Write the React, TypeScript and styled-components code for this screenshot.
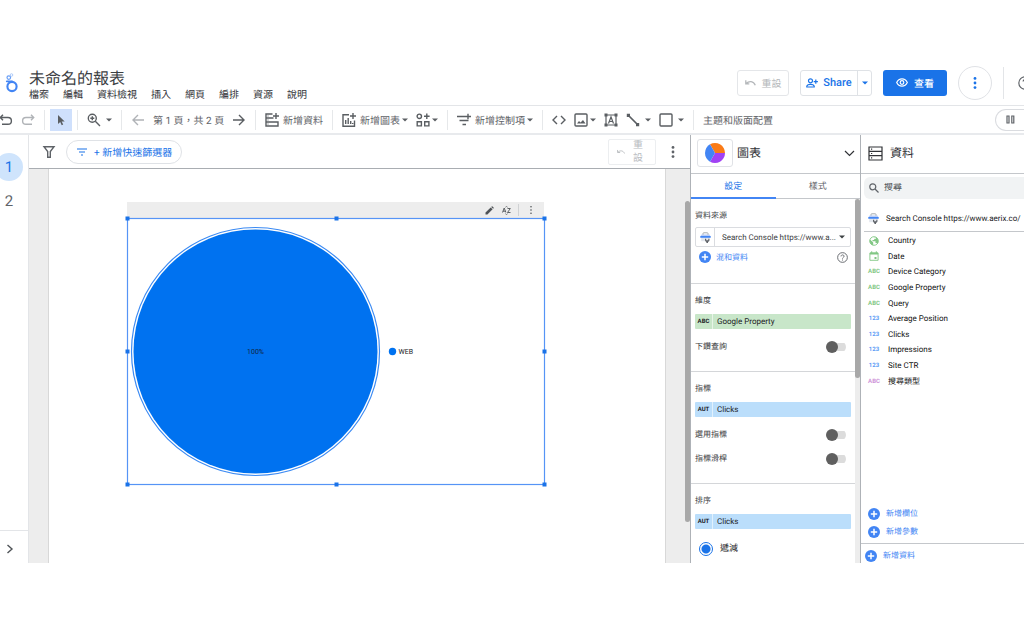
import React from "react";
import styled, { createGlobalStyle } from "styled-components";

const GlobalStyle = createGlobalStyle`
  * { box-sizing: border-box; }
  body {
    margin: 0;
    background: #fff;
    color: #3c4043;
    font-family: Roboto, "Noto Sans CJK TC", sans-serif;
    font-size: 10px;
    text-rendering: geometricPrecision;
    overflow: hidden;
  }
  button, input, select {
    font: inherit;
    color: inherit;
    text-rendering: inherit;
    margin: 0;
    padding: 0;
    border: 0;
    background: none;
  }
  h1, h2, h3, ul { margin: 0; padding: 0; font-weight: 400; list-style: none; }
  a { color: inherit; text-decoration: none; }
  svg { display: block; flex: none; }
`;

const Shell = styled.div`
  display: flex;
  flex-direction: column;
  height: 100vh;
  padding: 60px 0 75px;
`;

/* ---------- header ---------- */

const Header = styled.header`
  display: flex;
  flex: none;
  height: 46px;
  padding-left: 5px;
  border-bottom: 1px solid #e3e5e8;
  overflow: hidden;
`;

const Brand = styled.a`
  display: block;
  width: 24px;
  padding-top: 12px;
`;

const TitleBlock = styled.div`
  padding-top: 9px;
`;

const Title = styled.h1`
  font-size: 16px;
  line-height: 20px;
`;

const Menu = styled.nav`
  display: flex;
  gap: 14px;
  line-height: 13px;
  color: #303236;
`;

const HeaderActions = styled.div`
  display: flex;
  align-items: center;
  margin-left: auto;
  margin-right: -8px;
  font-weight: 500;
`;

const OutlineButton = styled.button`
  display: flex;
  align-items: center;
  justify-content: center;
  gap: 6px;
  width: 52px;
  height: 26px;
  border: 1px solid #e4e6e9;
  border-radius: 3px;
  color: #b4b7ba;
  font-weight: 400;
`;

const SplitButton = styled.div`
  display: flex;
  width: 72px;
  height: 26px;
  margin: 0 11px;
  border: 1px solid #dfe2e6;
  border-radius: 3px;
  color: #1a73e8;
`;

const ShareButton = styled.button`
  display: flex;
  flex: 1;
  align-items: center;
  justify-content: center;
  gap: 5px;
  font-size: 11px;
  font-weight: 500;
`;

const ShareMore = styled.button`
  display: flex;
  align-items: center;
  justify-content: center;
  width: 14px;
  border-left: 1px solid #dfe2e6;
`;

const ViewButton = styled.button`
  display: flex;
  align-items: center;
  justify-content: center;
  gap: 6px;
  width: 64px;
  height: 26px;
  border-radius: 3px;
  background: #1a73e8;
  color: #fff;
  font-weight: 500;
`;

const RoundButton = styled.button`
  display: flex;
  align-items: center;
  justify-content: center;
  width: 34px;
  height: 34px;
  margin: 0 11px;
  border: 1px solid #e0e2e6;
  border-radius: 50%;
  color: #1a73e8;
`;

const HelpButton = styled.button`
  display: flex;
  align-items: center;
  height: 32px;
  padding-left: 14px;
  border-left: 1px solid #e3e5e8;
  color: #5f6368;
`;

/* ---------- toolbar ---------- */

const Toolbar = styled.div`
  display: flex;
  flex: none;
  align-items: center;
  height: 29px;
  margin-left: -5px;
  border-bottom: 2px solid #e8eaed;
  color: #5f6368;
  white-space: nowrap;
`;

const Tool = styled.button<{ $active?: boolean; $muted?: boolean }>`
  display: flex;
  flex: none;
  align-items: center;
  gap: 4px;
  height: 22px;
  padding: 0 4px;
  background: ${(p) => (p.$active ? "#cfe0fc" : "transparent")};
  color: ${(p) => (p.$muted ? "#b0b3b7" : "#5a5e62")};
`;

const ToolLabel = styled.span`
  color: #5f6368;
`;

const PageLabel = styled.span`
  width: 79px;
  padding: 0 4px;
  text-align: center;
`;

const Drop = styled.span<{ $wide?: boolean }>`
  margin-left: ${(p) => (p.$wide ? "1px" : "-2px")};
`;

const Separator = styled.span`
  flex: none;
  width: 1px;
  height: 20px;
  margin: 0 5px;
  background: #e6e8ea;
`;

const PausePill = styled.button`
  display: flex;
  align-items: center;
  flex: none;
  width: 29px;
  height: 22px;
  margin-left: auto;
  padding-left: 10px;
  border: 1px solid #dadce0;
  border-right: 0;
  border-radius: 11px 0 0 11px;
  color: #5f6368;
`;

/* ---------- body ---------- */

const Body = styled.div`
  display: flex;
  flex: 1;
  min-height: 0;
`;

const PageRail = styled.nav`
  display: flex;
  flex: none;
  flex-direction: column;
  width: 29px;
  padding-top: 18px;
  border-right: 1px solid #e3e5e8;
`;

const PageButton = styled.button<{ $current?: boolean }>`
  width: 28px;
  height: 28px;
  margin: 0 0 6px -5px;
  border-radius: 50%;
  background: ${(p) => (p.$current ? "#cfe4fc" : "transparent")};
  color: ${(p) => (p.$current ? "#1a73e8" : "#5f6368")};
  font-size: 15px;
  line-height: 28px;
`;

const RailToggle = styled.button`
  display: flex;
  align-items: center;
  height: 33px;
  margin-top: auto;
  padding: 4px 0 0 6px;
  border-top: 1px solid #e3e5e8;
  color: #4f5357;
`;

const Workspace = styled.main`
  display: flex;
  flex: 1;
  flex-direction: column;
  min-width: 0;
`;

const FilterBar = styled.div`
  display: flex;
  flex: none;
  align-items: center;
  height: 34px;
  padding: 0 12px 0 13px;
  border-bottom: 1px solid #a9adb2;
  color: #5f6368;
`;

const QuickFilter = styled.button`
  display: flex;
  align-items: center;
  gap: 6px;
  height: 24px;
  margin-left: 10px;
  padding: 0 9px;
  border: 1px solid #dfe2e6;
  border-radius: 12px;
  color: #1a73e8;
`;

const FilterReset = styled.button`
  display: flex;
  align-items: center;
  justify-content: space-between;
  width: 48px;
  height: 26px;
  margin-left: auto;
  margin-right: 12px;
  padding: 0 12px 0 8px;
  border: 1px solid #eceef0;
  border-radius: 2px;
  color: #b9bcbf;
  line-height: 13px;
`;

const StackedLabel = styled.span`
  width: 10px;
  white-space: normal;
  word-break: break-all;
`;

const Stage = styled.div`
  display: flex;
  flex: 1;
  min-height: 0;
  padding-left: 19px;
  background: #ededed;
`;

const ReportPage = styled.section`
  flex: 1;
  min-width: 0;
  padding: 33px 0 0 78px;
  border: solid #d8d8d8;
  border-width: 0 1px;
  background: #fff;
  overflow: hidden;
`;

const ScrollTrack = styled.div<{ $gutter: number; $top: number }>`
  flex: none;
  width: ${(p) => p.$gutter}px;
  padding-top: ${(p) => p.$top}px;
  background: #ededed;
`;

const ScrollThumb = styled.div<{ $length: number }>`
  width: 5px;
  height: ${(p) => p.$length}px;
  margin-left: auto;
  border-radius: 3px;
  background: #a8a8a8;
`;

const ChartTools = styled.div`
  display: flex;
  align-items: center;
  justify-content: flex-end;
  width: 417px;
  height: 16px;
  padding-right: 5px;
  background: #ededed;
  color: #4f5357;
`;

const ChartTool = styled.button`
  display: flex;
  align-items: center;
  justify-content: center;
  width: 17px;
  height: 16px;
`;

const ToolRule = styled.span`
  width: 1px;
  height: 12px;
  margin: 0 3px;
  background: #d0d2d4;
`;

const ChartSvg = styled.svg`
  overflow: visible;
  font-family: Roboto, sans-serif;
  font-size: 7px;
`;

/* ---------- settings panel ---------- */

const Panel = styled.aside<{ $width: number }>`
  display: flex;
  flex: none;
  flex-direction: column;
  width: ${(p) => p.$width}px;
  border-left: 1px solid #aeb2b7;
  font-size: 8px;
`;

const PanelHeader = styled.div`
  display: flex;
  flex: none;
  align-items: center;
  height: 39px;
  padding: 0 5px 2px 6px;
  border-bottom: 1px solid #c4c7cb;
  color: #303236;
`;

const PanelTitle = styled.h2`
  flex: 1;
  font-size: 12px;
  line-height: 16px;
`;

const ChartKind = styled.button`
  display: flex;
  align-items: center;
  justify-content: center;
  width: 36px;
  height: 28px;
  margin-right: 4px;
  border: 1px solid #e0e2e6;
  border-radius: 3px;
`;

const Tabs = styled.div`
  display: flex;
  flex: none;
  height: 25px;
  border-bottom: 1px solid #c4c7cb;
`;

const Tab = styled.button<{ $selected?: boolean }>`
  flex: 1;
  margin-bottom: -1px;
  border-bottom: 2px solid ${(p) => (p.$selected ? "#4285f4" : "transparent")};
  color: ${(p) => (p.$selected ? "#1a73e8" : "#5f6368")};
  font-size: 9px;
`;

const PanelBody = styled.div`
  display: flex;
  flex: 1;
  min-height: 0;
`;

const PanelContent = styled.div`
  flex: 1;
  min-width: 0;
  overflow: hidden;
`;

const Section = styled.section<{ $bottom?: number }>`
  padding: 11px 4px ${(p) => p.$bottom ?? 14}px;
  border-bottom: 1px solid #d4d6d9;
`;

const SectionLabel = styled.h3`
  font-size: 8px;
  line-height: 12px;
`;

const SourceBox = styled.div`
  display: grid;
  grid-template-columns: 18px 1fr 17px;
  align-items: center;
  justify-items: center;
  height: 20px;
  margin-top: 5px;
  border: 1px solid #dadce0;
  border-radius: 2px;
`;

const SourceSelect = styled.select`
  grid-column: 2 / 4;
  grid-row: 1;
  width: 100%;
  height: 18px;
  padding-left: 7px;
  border-left: 1px solid #dadce0;
  appearance: none;
`;

const SelectArrow = styled.span`
  grid-column: 3;
  grid-row: 1;
  pointer-events: none;
`;

const Row = styled.div`
  display: flex;
  align-items: center;
  justify-content: space-between;
  height: 20px;
`;

const AddLink = styled.button`
  display: flex;
  align-items: center;
  gap: 5px;
  padding-left: 4px;
  color: #4285f4;
`;

const IconButton = styled.button`
  display: flex;
  padding: 0 3px;
  color: #5f6368;
`;

const Chip = styled.button<{ $tone: string }>`
  display: flex;
  align-items: center;
  width: 100%;
  height: 15px;
  margin-top: 7px;
  border-radius: 1px;
  background: ${(p) => p.$tone};
  color: #202124;
  text-align: left;
`;

const ChipType = styled.span`
  width: 18px;
  margin-right: 4px;
  border-right: 1px solid #ffffff90;
  font-size: 6px;
  font-weight: 700;
  line-height: 15px;
  text-align: center;
`;

const ToggleRow = styled.label<{ $next?: boolean }>`
  display: flex;
  align-items: center;
  justify-content: space-between;
  height: 20px;
  margin-top: ${(p) => (p.$next ? 4 : 8)}px;
  padding-right: 5px;
  line-height: 12px;
`;

const Switch = styled.input`
  appearance: none;
  display: flex;
  align-items: center;
  width: 20px;
  height: 12px;
  background: linear-gradient(#dcdcdc, #dcdcdc) 4px 2px / 16px 8px no-repeat;
  border-radius: 6px;

  &::before {
    content: "";
    width: 12px;
    height: 12px;
    border-radius: 50%;
    background: #5f5f5f;
  }
`;

const RadioRow = styled.label`
  display: flex;
  align-items: center;
  gap: 7px;
  height: 24px;
  margin-top: 8px;
  padding-left: 4px;
  color: #202124;
  font-size: 9px;
  line-height: 12px;
`;

const Radio = styled.input`
  appearance: none;
  width: 14px;
  height: 14px;
  border: 1px solid #1a73e8;
  border-radius: 50%;
  background: radial-gradient(circle, #1a73e8 4px, #fff 5px);
`;

/* ---------- data panel ---------- */

const DataHeader = styled(PanelHeader)`
  gap: 7px;
  padding-left: 7px;
`;

const SearchBox = styled.label`
  display: flex;
  flex: none;
  align-items: center;
  gap: 5px;
  height: 22px;
  margin: 3px 0 0 3px;
  padding-left: 5px;
  border-radius: 6px 0 0 6px;
  background: #f1f3f4;
  color: #5f6368;
`;

const SearchInput = styled.input`
  flex: 1;
  min-width: 0;
  font-size: 9px;
  outline: 0;

  &::placeholder { color: #4f5357; opacity: 1; }
`;

const SourceRow = styled.div`
  display: flex;
  flex: none;
  align-items: center;
  gap: 7px;
  height: 26px;
  margin: 7px 0 0 3px;
  padding-left: 4px;
  border-bottom: 1px solid #c4c7cb;
  color: #202124;
  white-space: nowrap;
`;

const FieldList = styled.ul`
  display: grid;
  flex: none;
  grid-auto-rows: 1fr;
  height: 156px;
  margin-top: 1px;
  padding-left: 7px;
`;

const Field = styled.li`
  display: flex;
  align-items: center;
  color: #111;
`;

const FieldType = styled.span<{ $tone: string }>`
  display: flex;
  justify-content: center;
  width: 12px;
  margin-right: 8px;
  color: ${(p) => p.$tone};
  font-size: 6px;
  font-weight: 700;
`;

const FieldActions = styled.div`
  display: flex;
  flex-direction: column;
  gap: 6px;
  margin-top: auto;
  padding: 0 0 5px 3px;
`;

const DataFooter = styled.div`
  display: flex;
  flex: none;
  align-items: center;
  height: 20px;
  padding-top: 4px;
  border-top: 1px solid #c4c7cb;
`;

const ActionLink = styled.button`
  display: flex;
  align-items: center;
  gap: 6px;
  height: 12px;
  padding-left: 4px;
  color: #4285f4;
  line-height: 12px;
`;

/* ---------- icons ---------- */

const line = { fill: "none", stroke: "currentColor", strokeWidth: 1.4 };

const Caret = () => (
  <svg width="6" height="4" viewBox="0 0 6 4"><path d="M0 .5h6L3 3.5z" fill="currentColor" /></svg>
);

const Dots = ({ h = 12, r = 1.4 }: { h?: number; r?: number }) => (
  <svg width="4" height={h} viewBox={`0 0 4 ${h}`} fill="currentColor">
    <circle cx="2" cy={r} r={r} /><circle cx="2" cy={h / 2} r={r} /><circle cx="2" cy={h - r} r={r} />
  </svg>
);

const Plus = () => (
  <svg width="12" height="12" viewBox="0 0 12 12">
    <circle cx="6" cy="6" r="6" fill="#4285f4" />
    <path d="M6 2.800v6.400M2.800 6h6.400" stroke="#fff" strokeWidth="1.5" />
  </svg>
);

const Help = ({ size = 11 }: { size?: number }) => (
  <svg width={size} height={size} viewBox="0 0 12 12" fill="none" stroke="currentColor" strokeWidth="1">
    <circle cx="6" cy="6" r="5.3" />
    <path d="M4.4 4.8c0-2.2 3.3-2.1 3.3-.1C7.700 5.900 6 5.900 6 7.200M6 8.200v1.100" />
  </svg>
);

const SmallUndo = ({ w = 11 }: { w?: number }) => (
  <svg width={w} height={w * 0.7} viewBox="0 0 11 7" {...line} strokeWidth="1.3">
    <path d="M.8 1v3.500h3.500M1.200 4.200C4 1.200 8.500 1.500 10.300 5.800" />
  </svg>
);

const Console = () => (
  <svg width="11" height="11" viewBox="0 0 11 11">
    <path d="M3 3V1.500Q3 .8 3.700 .8h3.600Q8 .8 8 1.500V3" fill="none" stroke="#9aa0a6" strokeWidth=".9" />
    <path d="M1.500 2.600h8l1 1.700H.5z" fill="#b9cdf5" />
    <rect x=".3" y="4" width="10.400" height="1.800" fill="#4285f4" />
    <path d="M1.200 6h8.600v3.200H1.200z" fill="#e3e7ee" />
    <path d="M5 6.700v1.500a2 2 0 0 0 1.400 1.700v1h1.600v-1a2 2 0 0 0 1.400-1.700V6.700H8.300v1.500H6.200V6.700z" fill="#5f6368" />
  </svg>
);

const Logo = () => (
  <svg width="14" height="21" viewBox="0 0 14 21" fill="none">
    <circle cx="7" cy="14.500" r="4.600" stroke="#4285f4" strokeWidth="2.100" />
    <path d="M1.800 9.300h5.200" stroke="#4285f4" strokeWidth="1.800" strokeLinecap="round" />
    <circle cx="3.800" cy="5.600" r="1.800" stroke="#669df6" strokeWidth="1.200" />
    <circle cx="6.500" cy="3" r="1.300" stroke="#aecbfa" strokeWidth="1" />
  </svg>
);

const I14 = ({ children, fill }: { children: React.ReactNode; fill?: boolean }) => (
  <svg width="14" height="14" viewBox="0 0 14 14" {...(fill ? { fill: "currentColor" } : line)}>{children}</svg>
);

const Globe = () => (
  <svg width="10" height="10" viewBox="0 0 10 10">
    <circle cx="5" cy="5" r="4.300" fill="none" stroke="currentColor" strokeWidth=".9" />
    <path d="M1 3.500 4.200 6.500V9.300Q1 8.500.8 5zM4 1.200h3v1.500H5.500L5 4H3.500v1.200h3V7H8l.5 1Q9.800 6 9 3.500 8 .8 4 1.200z" fill="currentColor" />
  </svg>
);

const Calendar = () => (
  <svg width="10" height="10" viewBox="0 0 10 10">
    <path d="M.9 2h8.200v7.300H.9z" fill="none" stroke="currentColor" strokeWidth=".9" />
    <path d="M.9 1.600h8.200v1.900H.9zM2.200.3h1v1.500h-1zM6.800.3h1v1.500h-1zM5.500 6h2v2h-2z" fill="currentColor" />
  </svg>
);

/* ---------- data ---------- */

const MENU = ["檔案", "編輯", "資料檢視", "插入", "網頁", "編排", "資源", "說明"];

const GREEN = "#81c784";
const BLUE = "#5c9cf5";
const PURPLE = "#ce93d8";

const FIELDS: { type: React.ReactNode; tone: string; name: string }[] = [
  { type: <Globe />, tone: GREEN, name: "Country" },
  { type: <Calendar />, tone: GREEN, name: "Date" },
  { type: "ABC", tone: GREEN, name: "Device Category" },
  { type: "ABC", tone: GREEN, name: "Google Property" },
  { type: "ABC", tone: GREEN, name: "Query" },
  { type: "123", tone: BLUE, name: "Average Position" },
  { type: "123", tone: BLUE, name: "Clicks" },
  { type: "123", tone: BLUE, name: "Impressions" },
  { type: "123", tone: BLUE, name: "Site CTR" },
  { type: "ABC", tone: PURPLE, name: "搜尋類型" },
];

const HANDLES = [[0, 0], [209, 0], [417, 0], [0, 133], [417, 133], [0, 266], [209, 266], [417, 266]];

const PieChart = () => (
  <ChartSvg width="418" height="267" viewBox="0 0 418 267">
    <rect x=".5" y=".5" width="417" height="266" fill="none" stroke="#5694f6" strokeWidth="1.200" />
    <circle cx="128.500" cy="133.500" r="124" fill="#fff" stroke="#3b8af3" strokeWidth="1.200" />
    <circle cx="128.500" cy="133.500" r="122" fill="#0072f0" />
    <text x="128.500" y="136" textAnchor="middle" fill="#12233b">100%</text>
    <circle cx="265.500" cy="133.500" r="3.700" fill="#0072f0" />
    <text x="271.500" y="136" fill="#202124">WEB</text>
    {HANDLES.map(([x, y]) => (
      <rect key={`${x}-${y}`} x={x - 1.5} y={y - 1.5} width="4" height="4" fill="#1a73e8" />
    ))}
  </ChartSvg>
);

const Toggle = ({ label, next }: { label: string; next?: boolean }) => (
  <ToggleRow $next={next}>{label}<Switch type="checkbox" role="switch" /></ToggleRow>
);

export default function App() {
  return (
    <Shell>
      <GlobalStyle />
      <Header>
        <Brand href="#" aria-label="Looker Studio"><Logo /></Brand>
        <TitleBlock>
          <Title>未命名的報表</Title>
          <Menu>{MENU.map((m) => <button key={m}>{m}</button>)}</Menu>
        </TitleBlock>
        <HeaderActions>
          <OutlineButton><SmallUndo />重設</OutlineButton>
          <SplitButton>
            <ShareButton>
              <svg width="12" height="10" viewBox="0 0 12 10" {...line} strokeWidth="1.200">
                <circle cx="4.500" cy="2.800" r="2" />
                <path d="M.8 9V8Q1.500 6.300 4.500 6.300T8.200 8v1zM9.800 1.500v4.200M7.700 3.600h4.200" />
              </svg>
              Share
            </ShareButton>
            <ShareMore aria-label="Share options"><Caret /></ShareMore>
          </SplitButton>
          <ViewButton>
            <svg width="12" height="9" viewBox="0 0 12 9" {...line} strokeWidth="1.200">
              <path d="M.7 4.500C3-.4 9-.4 11.300 4.500 9 9.400 3 9.400.7 4.500z" /><circle cx="6" cy="4.500" r="1.800" />
            </svg>
            查看
          </ViewButton>
          <RoundButton aria-label="More"><Dots /></RoundButton>
          <HelpButton aria-label="Help"><Help size={14} /></HelpButton>
        </HeaderActions>
      </Header>

      <Toolbar>
        <Tool aria-label="Undo"><I14><path d="M4 1.800 1.300 4.500 4 7.200M1.500 4.500h7.500a3.400 3.400 0 0 1 0 6.800H3" /></I14></Tool>
        <Tool $muted aria-label="Redo"><I14><path d="M10 1.800l2.700 2.700L10 7.200M12.500 4.500H5a3.400 3.400 0 0 0 0 6.800h6" /></I14></Tool>
        <Separator />
        <Tool $active aria-label="Select"><I14 fill><path d="M4 2v9l2.200-2 1.500 3.300 1.500-.7L7.700 8.400h3z" /></I14></Tool>
        <Separator />
        <Tool aria-label="Zoom">
          <I14><circle cx="5.300" cy="5.300" r="4" /><path d="M8.300 8.300 13 13M5.300 3.300v4M3.300 5.300h4" /></I14>
          <Drop $wide><Caret /></Drop>
        </Tool>
        <Separator />
        <Tool $muted aria-label="Previous page"><I14><path d="M13 7H2M7 2 2 7l5 5" /></I14></Tool>
        <PageLabel>第 1 頁，共 2 頁</PageLabel>
        <Tool aria-label="Next page"><I14><path d="M1 7h11M7 2l5 5-5 5" /></I14></Tool>
        <Separator />
        <Tool>
          <I14>
            <path d="M7.500 1H1v12h12V9H1M1 5h7.500M13 9v4M11 0v6M8 3h6" />
            <path d="M2.500 3h1M2.500 7h1M2.500 11h1" strokeWidth="1" />
          </I14>
          <ToolLabel>新增資料</ToolLabel>
        </Tool>
        <Separator />
        <Tool>
          <I14><path d="M7 1.700H1v11.600h11.500V7.500M3.700 11V7M6.200 11V5M8.700 11V8M10.700 11v-1M11 0v6M8 3h6" /></I14>
          <ToolLabel>新增圖表</ToolLabel>
          <Drop><Caret /></Drop>
        </Tool>
        <Tool aria-label="Community visualizations">
          <I14><circle cx="3.300" cy="3.300" r="2.200" /><path d="M1.200 8.700h4.200v4.200H1.200zM8.700 8.700h4.200v4.200H8.700zM10.800.5v5.600M8 3.300h5.600" /></I14>
          <Drop><Caret /></Drop>
        </Tool>
        <Separator />
        <Tool>
          <I14><path d="M0 3.500h8M2.500 7.500h9M5.500 11.500h3.500M11 .7v5.600M8 3.500h6" /></I14>
          <ToolLabel>新增控制項</ToolLabel>
          <Drop><Caret /></Drop>
        </Tool>
        <Separator />
        <Tool aria-label="Embed URL"><I14><path d="M5 3 1 7l4 4M9 3l4 4-4 4" /></I14></Tool>
        <Tool aria-label="Image">
          <I14><rect x="1" y="1" width="12" height="12" rx="1" /><path d="M3 10.500l2-2.500 1.500 1.500L9 7l2.500 3.500z" fill="currentColor" stroke="none" /></I14>
          <Drop><Caret /></Drop>
        </Tool>
        <Tool aria-label="Text">
          <I14><path d="M2 2h10v10H2zM4.500 10.500 7 4l2.500 6.500M5.300 8.500h3.400" strokeWidth="1.200" /><path d="M.5.500h3v3h-3zM10.500.500h3v3h-3zM.5 10.500h3v3h-3zM10.500 10.500h3v3h-3z" fill="currentColor" stroke="none" /></I14>
        </Tool>
        <Tool aria-label="Line">
          <I14><path d="M2.500 2.500l9 9" strokeWidth="1.700" /><path d="M.8.800h3.200v3.200H.8zM10 10h3.200v3.200H10z" fill="currentColor" stroke="none" /></I14>
          <Drop $wide><Caret /></Drop>
        </Tool>
        <Tool aria-label="Shape">
          <I14><rect x="1" y="1" width="12" height="12" rx="1" /></I14>
          <Drop $wide><Caret /></Drop>
        </Tool>
        <Separator />
        <Tool><ToolLabel>主題和版面配置</ToolLabel></Tool>
        <PausePill aria-label="Pause updates">
          <svg width="9" height="9" viewBox="0 0 9 9" {...line} strokeWidth="1.200"><path d="M1 1h2v7H1zM5.800 1h2v7h-2z" /></svg>
        </PausePill>
      </Toolbar>

      <Body>
        <PageRail>
          <PageButton $current>1</PageButton>
          <PageButton>2</PageButton>
          <RailToggle aria-label="Expand">
            <svg width="8" height="10" viewBox="0 0 8 10" {...line}><path d="M1.500 1 6 5 1.500 9" /></svg>
          </RailToggle>
        </PageRail>

        <Workspace>
          <FilterBar>
            <I14><path d="M2 1.700h10L8.300 6.500v5.800H5.700V6.500z" /></I14>
            <QuickFilter>
              <svg width="12" height="8" viewBox="0 0 12 8" {...line} strokeWidth="1.200"><path d="M1 1h10M3 4h6M5 7h2" /></svg>
              + 新增快速篩選器
            </QuickFilter>
            <FilterReset><SmallUndo w={8} /><StackedLabel>重設</StackedLabel></FilterReset>
            <IconButton aria-label="Filter options"><Dots /></IconButton>
          </FilterBar>
          <Stage>
            <ReportPage>
              <ChartTools>
                <ChartTool aria-label="Edit">
                  <svg width="9" height="9" viewBox="0 0 9 9" fill="currentColor"><path d="M.5 8.500V6.600L5.700 1.400l1.900 1.900L2.400 8.500zM6.200.9l.5-.5q.4-.3.8 0l1.100 1.100q.3.400 0 .8l-.5.5z" /></svg>
                </ChartTool>
                <ChartTool aria-label="Sort">
                  <svg width="9" height="9" viewBox="0 0 9 9" {...line} strokeWidth=".9"><path d="M.5 6.500 2.200 2l1.700 4.500M1 5.200h2.400M5.500 2.500h2.800L5.500 6.500h3M3.500 1.200 4.500.3l1 .9M3.500 7.800l1 .9 1-.9" /></svg>
                </ChartTool>
                <ToolRule />
                <ChartTool aria-label="More"><Dots h={8} r={0.8} /></ChartTool>
              </ChartTools>
              <PieChart />
            </ReportPage>
            <ScrollTrack $gutter={24} $top={32}><ScrollThumb $length={321} /></ScrollTrack>
          </Stage>
        </Workspace>

        <Panel $width={170}>
          <PanelHeader>
            <ChartKind aria-label="Chart type">
              <svg width="20" height="20" viewBox="0 0 20 20">
                <path d="M10 10 5 1.340A10 10 0 0 1 20 10z" fill="#fa7b17" />
                <path d="M10 10h10A10 10 0 0 1 5 18.660z" fill="#a142f4" />
                <path d="M10 10 5 18.660A10 10 0 0 1 5 1.340z" fill="#4285f4" />
              </svg>
            </ChartKind>
            <PanelTitle>圖表</PanelTitle>
            <svg width="11" height="7" viewBox="0 0 11 7" {...line} strokeWidth="1.200"><path d="M1 1l4.500 4.500L10 1" /></svg>
          </PanelHeader>
          <Tabs role="tablist">
            <Tab role="tab" aria-selected $selected>設定</Tab>
            <Tab role="tab">樣式</Tab>
          </Tabs>
          <PanelBody>
            <PanelContent>
              <Section $bottom={16}>
                <SectionLabel>資料來源</SectionLabel>
                <SourceBox>
                  <Console />
                  <SourceSelect aria-label="資料來源"><option>Search Console https://www.a...</option></SourceSelect>
                  <SelectArrow><Caret /></SelectArrow>
                </SourceBox>
                <Row>
                  <AddLink><Plus />混和資料</AddLink>
                  <IconButton aria-label="Help"><Help /></IconButton>
                </Row>
              </Section>
              <Section>
                <SectionLabel>維度</SectionLabel>
                <Chip $tone="#c8e6c9"><ChipType>ABC</ChipType>Google Property</Chip>
                <Toggle label="下鑽查詢" />
              </Section>
              <Section>
                <SectionLabel>指標</SectionLabel>
                <Chip $tone="#bbdefb"><ChipType>AUT</ChipType>Clicks</Chip>
                <Toggle label="選用指標" />
                <Toggle label="指標滑桿" next />
              </Section>
              <Section>
                <SectionLabel>排序</SectionLabel>
                <Chip $tone="#bbdefb"><ChipType>AUT</ChipType>Clicks</Chip>
                <RadioRow><Radio type="radio" name="order" defaultChecked />遞減</RadioRow>
              </Section>
            </PanelContent>
            <ScrollTrack $gutter={5} $top={0}><ScrollThumb $length={179} /></ScrollTrack>
          </PanelBody>
        </Panel>

        <Panel $width={164}>
          <DataHeader>
            <svg width="15" height="15" viewBox="0 0 15 15" {...line} strokeWidth="1.200">
              <path d="M1 1h13v13H1zM1 5.300h13M1 9.700h13" /><path d="M3 3.200h1.200M3 7.500h1.200M3 11.800h1.200" />
            </svg>
            <PanelTitle>資料</PanelTitle>
          </DataHeader>
          <SearchBox>
            <svg width="10" height="10" viewBox="0 0 10 10" {...line} strokeWidth="1.200"><circle cx="3.800" cy="3.800" r="3" /><path d="M6 6l3.500 3.500" /></svg>
            <SearchInput placeholder="搜尋" aria-label="搜尋" />
          </SearchBox>
          <SourceRow><Console />Search Console https://www.aerix.co/</SourceRow>
          <FieldList>
            {FIELDS.map((f) => (
              <Field key={f.name}><FieldType $tone={f.tone}>{f.type}</FieldType>{f.name}</Field>
            ))}
          </FieldList>
          <FieldActions>
            <ActionLink><Plus />新增欄位</ActionLink>
            <ActionLink><Plus />新增參數</ActionLink>
          </FieldActions>
          <DataFooter><ActionLink><Plus />新增資料</ActionLink></DataFooter>
        </Panel>
      </Body>
    </Shell>
  );
}
